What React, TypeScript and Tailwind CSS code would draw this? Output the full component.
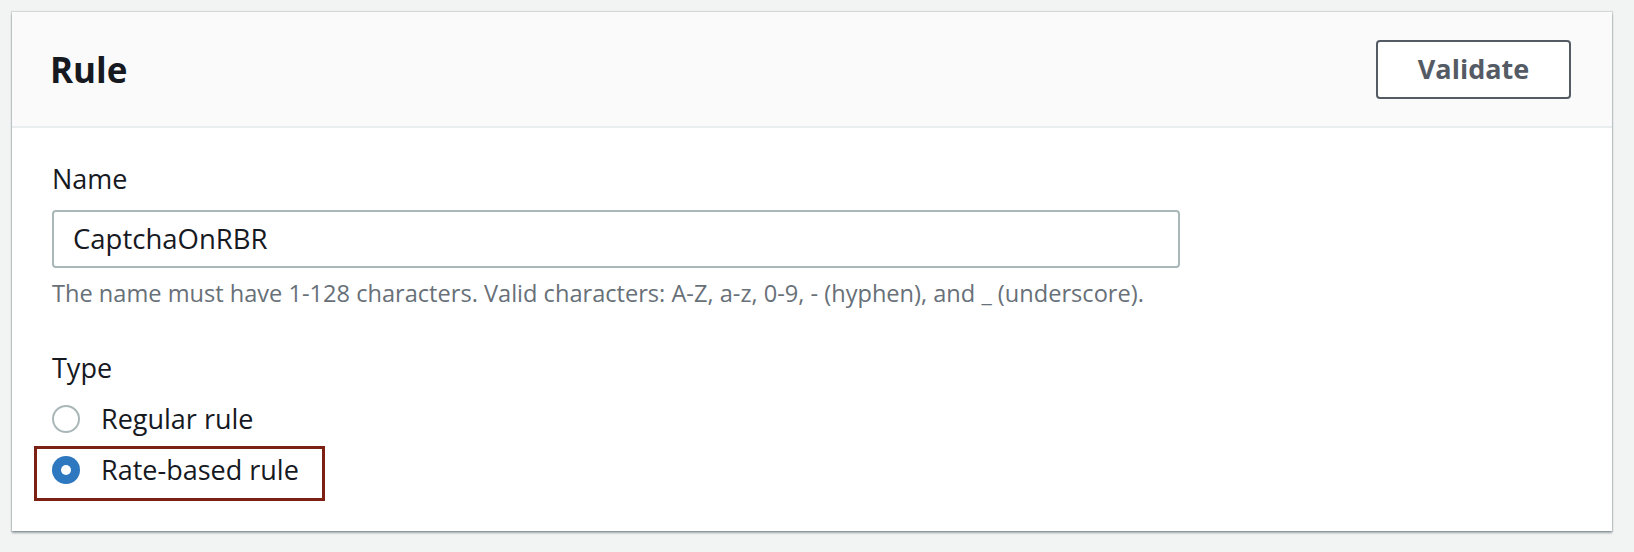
export default function App() {
  return (
    <div
      className="min-h-[552px] w-full bg-[#f2f3f3] pl-[12px] pt-[12px]"
      style={{ fontFamily: '"Open Sans", "Noto Sans", Arial, sans-serif' }}
    >
      <div className="w-[1600px] bg-white shadow-[0_2px_2px_0_rgba(0,28,36,0.35),0_0_1px_1px_rgba(0,28,36,0.12)]">
        {/* Header */}
        <div className="flex h-[116px] items-center justify-between border-b-2 border-[#eaeded] bg-[#fafafa] pl-[38px] pr-[41px]">
          <h2 className="text-[35px] font-bold leading-none text-[#16191f]">Rule</h2>
          <button className="h-[59px] w-[195px] rounded-[4px] border-2 border-[#545b64] bg-white text-[27px] font-bold text-[#545b64]">
            Validate
          </button>
        </div>

        {/* Body */}
        <div className="pb-[30px] pl-[40px] pt-[33px]">
          <div className="text-[27px] leading-[36px] text-[#16191f]">Name</div>
          <div className="mt-[13px] flex h-[58px] w-[1128px] items-center rounded-[4px] border-2 border-[#aab7b8] pl-[19px] text-[27.5px] text-[#16191f]">
            CaptchaOnRBR
          </div>
          <p className="mt-[9px] text-[23.6px] leading-[32px] text-[#687078]">
            The name must have 1-128 characters. Valid characters: A-Z, a-z, 0-9, - (hyphen), and _ (underscore).
          </p>

          <div className="mt-[41px] text-[27px] leading-[36px] text-[#16191f]">Type</div>
          <div className="mt-[13px] flex flex-col gap-[7px]">
            <label className="flex h-[40px] items-center gap-[21px]">
              <span className="h-[28px] w-[28px] rounded-full border-2 border-[#aab7b8] bg-white" />
              <span className="text-[27px] leading-[36px] text-[#16191f]">Regular rule</span>
            </label>
            <label className="-ml-[18px] flex h-[55px] w-[291px] items-center gap-[21px] border-[3px] border-[#7b2012] pb-[7px] pl-[15px]">
              <span className="flex h-[28px] w-[28px] items-center justify-center rounded-full bg-[#2e78bf]">
                <span className="h-[10px] w-[10px] rounded-full bg-white" />
              </span>
              <span className="text-[27px] leading-[36px] text-[#16191f]">Rate-based rule</span>
            </label>
          </div>
        </div>
      </div>
    </div>
  );
}
